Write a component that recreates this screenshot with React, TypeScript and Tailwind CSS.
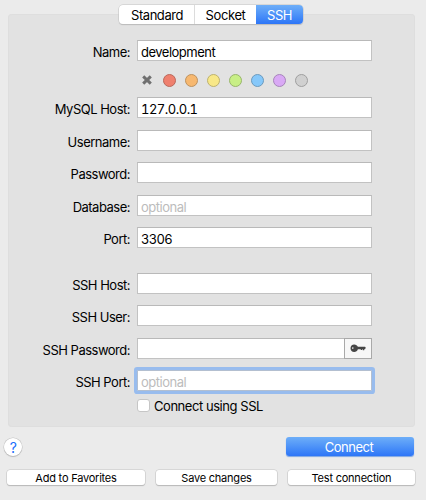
import type { ReactNode } from "react";

function Row({ label, gap, children }: { label: string; gap: string; children: ReactNode }) {
  return (
    <div className={`flex h-[21px] shrink-0 ${gap}`}>
      <label className="w-[122px] pt-[2px] text-right leading-[20px] whitespace-nowrap">{label}</label>
      <div className="ml-[7px] flex w-[235px]">{children}</div>
    </div>
  );
}

function Field({ value, optional, focused }: { value?: string; optional?: boolean; focused?: boolean }) {
  return (
    <div
      className={`min-w-0 flex-1 border bg-white pt-px pl-[3px] leading-[20px] whitespace-nowrap ${
        focused ? "rounded-[1px] border-[#b3bfd0] shadow-[0_0_0_3px_#98bcee]" : "border-[#c2c2c2] border-t-[#b9b9b9]"
      }`}
    >
      {optional ? <span className="text-[#bcbcbc]">optional</span> : value}
    </div>
  );
}

function KeyIcon() {
  return (
    <svg width="16" height="9" viewBox="0 0 16 9" className="block">
      <path
        fillRule="evenodd"
        fill="#454545"
        d="M4.2.4C6 .4 7.3 1.4 7.9 2.8H15L15.8 3.8 15 5.2H14.2V6.3H12.8V5.2H12.1V6.1H10.8V5.2H7.9C7.3 6.9 6 8 4.2 8 2 8 .5 6.3.5 4.2S2 .4 4.2.4ZM2.8 3.3A.8.8 0 1 0 2.8 4.9 .8.8 0 0 0 2.8 3.3Z"
      />
    </svg>
  );
}

const swatches = [
  "bg-[#ef806e] border-[#b9685b]",
  "bg-[#f7b870] border-[#bd925f]",
  "bg-[#f8e888] border-[#bdb26f]",
  "bg-[#c8ef86] border-[#99b56c]",
  "bg-[#86c8fa] border-[#6b9abd]",
  "bg-[#d9a9f5] border-[#a685ba]",
  "bg-[#d0d0d0] border-[#9f9f9f]",
];

export default function App() {
  return (
    <div className="flex h-[500px] w-[426px] flex-col overflow-hidden bg-[#ebebeb] pt-[14px] font-['Inter','Liberation_Sans',sans-serif] text-[13px] tracking-[-0.5px] text-black">
      <div className="ml-[8px] flex h-[413px] w-[407px] shrink-0 flex-col rounded-[4px] bg-[#e2e2e2] shadow-[inset_0_0_0_1px_#dedede]">
        <div className="-mt-[9px] ml-[111px] flex h-[19px] w-[184px] shrink-0 rounded-[4px] bg-white leading-[20px] shadow-[0_0_0_0.5px_#c4c4c4,0_1px_1px_#b4b4b4]">
          <div className="w-[76px] border-r border-[#dcdcdc] pl-px text-center tracking-[-0.45px]">Standard</div>
          <div className="w-[61px] text-center tracking-[-0.4px]">Socket</div>
          <div className="w-[47px] rounded-r-[4px] bg-linear-to-b from-[#6eaef8] to-[#2d75f7] text-center text-white">SSH</div>
        </div>

        <Row label="Name:" gap="mt-[16px]"><Field value="development" /></Row>
        <div className="mt-[12px] ml-[134px] flex h-[14px] shrink-0 items-center">
          <svg width="10" height="10" viewBox="0 0 10 10" className="mr-[11px]">
            <path d="M1.2 1.4 8.8 8.6M8.8 1.4 1.2 8.6" stroke="#707070" strokeWidth="3" />
          </svg>
          <div className="flex gap-[9px]">
            {swatches.map((s) => (
              <span key={s} className={`h-[13px] w-[13px] rounded-full border ${s}`} />
            ))}
          </div>
        </div>
        <Row label="MySQL Host:" gap="mt-[10px]">
          <div className="flex flex-1 tracking-[-0.5px] tabular-nums"><Field value="127.0.0.1" /></div>
        </Row>
        <Row label="Username:" gap="mt-[12px]"><Field /></Row>
        <Row label="Password:" gap="mt-[11px]"><Field /></Row>
        <Row label="Database:" gap="mt-[12px]"><Field optional /></Row>
        <Row label="Port:" gap="mt-[11px]">
          <div className="flex flex-1 tracking-[-0.7px] tabular-nums"><Field value="3306" /></div>
        </Row>
        <Row label="SSH Host:" gap="mt-[25px]"><Field /></Row>
        <Row label="SSH User:" gap="mt-[11px]"><Field /></Row>
        <Row label="SSH Password:" gap="mt-[12px]">
          <Field />
          <div className="-ml-px flex w-[28px] items-center justify-center border border-[#a9a9a9] bg-[#f7f7f7]"><KeyIcon /></div>
        </Row>
        <Row label="SSH Port:" gap="mt-[11px]"><Field optional focused /></Row>
        <div className="mt-[8px] ml-[129px] flex h-[13px] shrink-0">
          <span className="h-[13px] w-[13px] rounded-[3px] border border-[#c6c6c6] bg-white" />
          <span className="ml-[4px] leading-[14px] tracking-[-0.45px] whitespace-nowrap">Connect using SSL</span>
        </div>
      </div>

      <div className="mt-[10px] flex h-[20px] shrink-0 justify-between pr-[12px] pl-[4px]">
        <div className="mt-[1px] h-[18px] w-[18px] rounded-full bg-white text-center text-[14px] leading-[19px] text-[#1a6dfb] shadow-[0_0_0_0.5px_#c0c0c0,0_1px_1px_#b4b4b4]">?</div>
        <div className="h-[19px] w-[128px] rounded-[3px] bg-linear-to-b from-[#6eaef8] to-[#2d75f7] pr-[2px] text-center leading-[20px] text-white shadow-[0_1px_1px_#7da6e4]">Connect</div>
      </div>
      <div className="mt-[13px] flex h-[15px] shrink-0 pl-[7px] text-center text-[11px] leading-[17px] tracking-[-0.22px]">
        <div className="w-[138px] rounded-[3px] bg-white shadow-[0_0_0_0.5px_#c4c4c4,0_1px_1px_#b0b0b0]">Add to Favorites</div>
        <div className="ml-[11px] w-[121px] rounded-[3px] bg-white shadow-[0_0_0_0.5px_#c4c4c4,0_1px_1px_#b0b0b0]">Save changes</div>
        <div className="ml-[11px] w-[127px] rounded-[3px] bg-white shadow-[0_0_0_0.5px_#c4c4c4,0_1px_1px_#b0b0b0]">Test connection</div>
      </div>
    </div>
  );
}
